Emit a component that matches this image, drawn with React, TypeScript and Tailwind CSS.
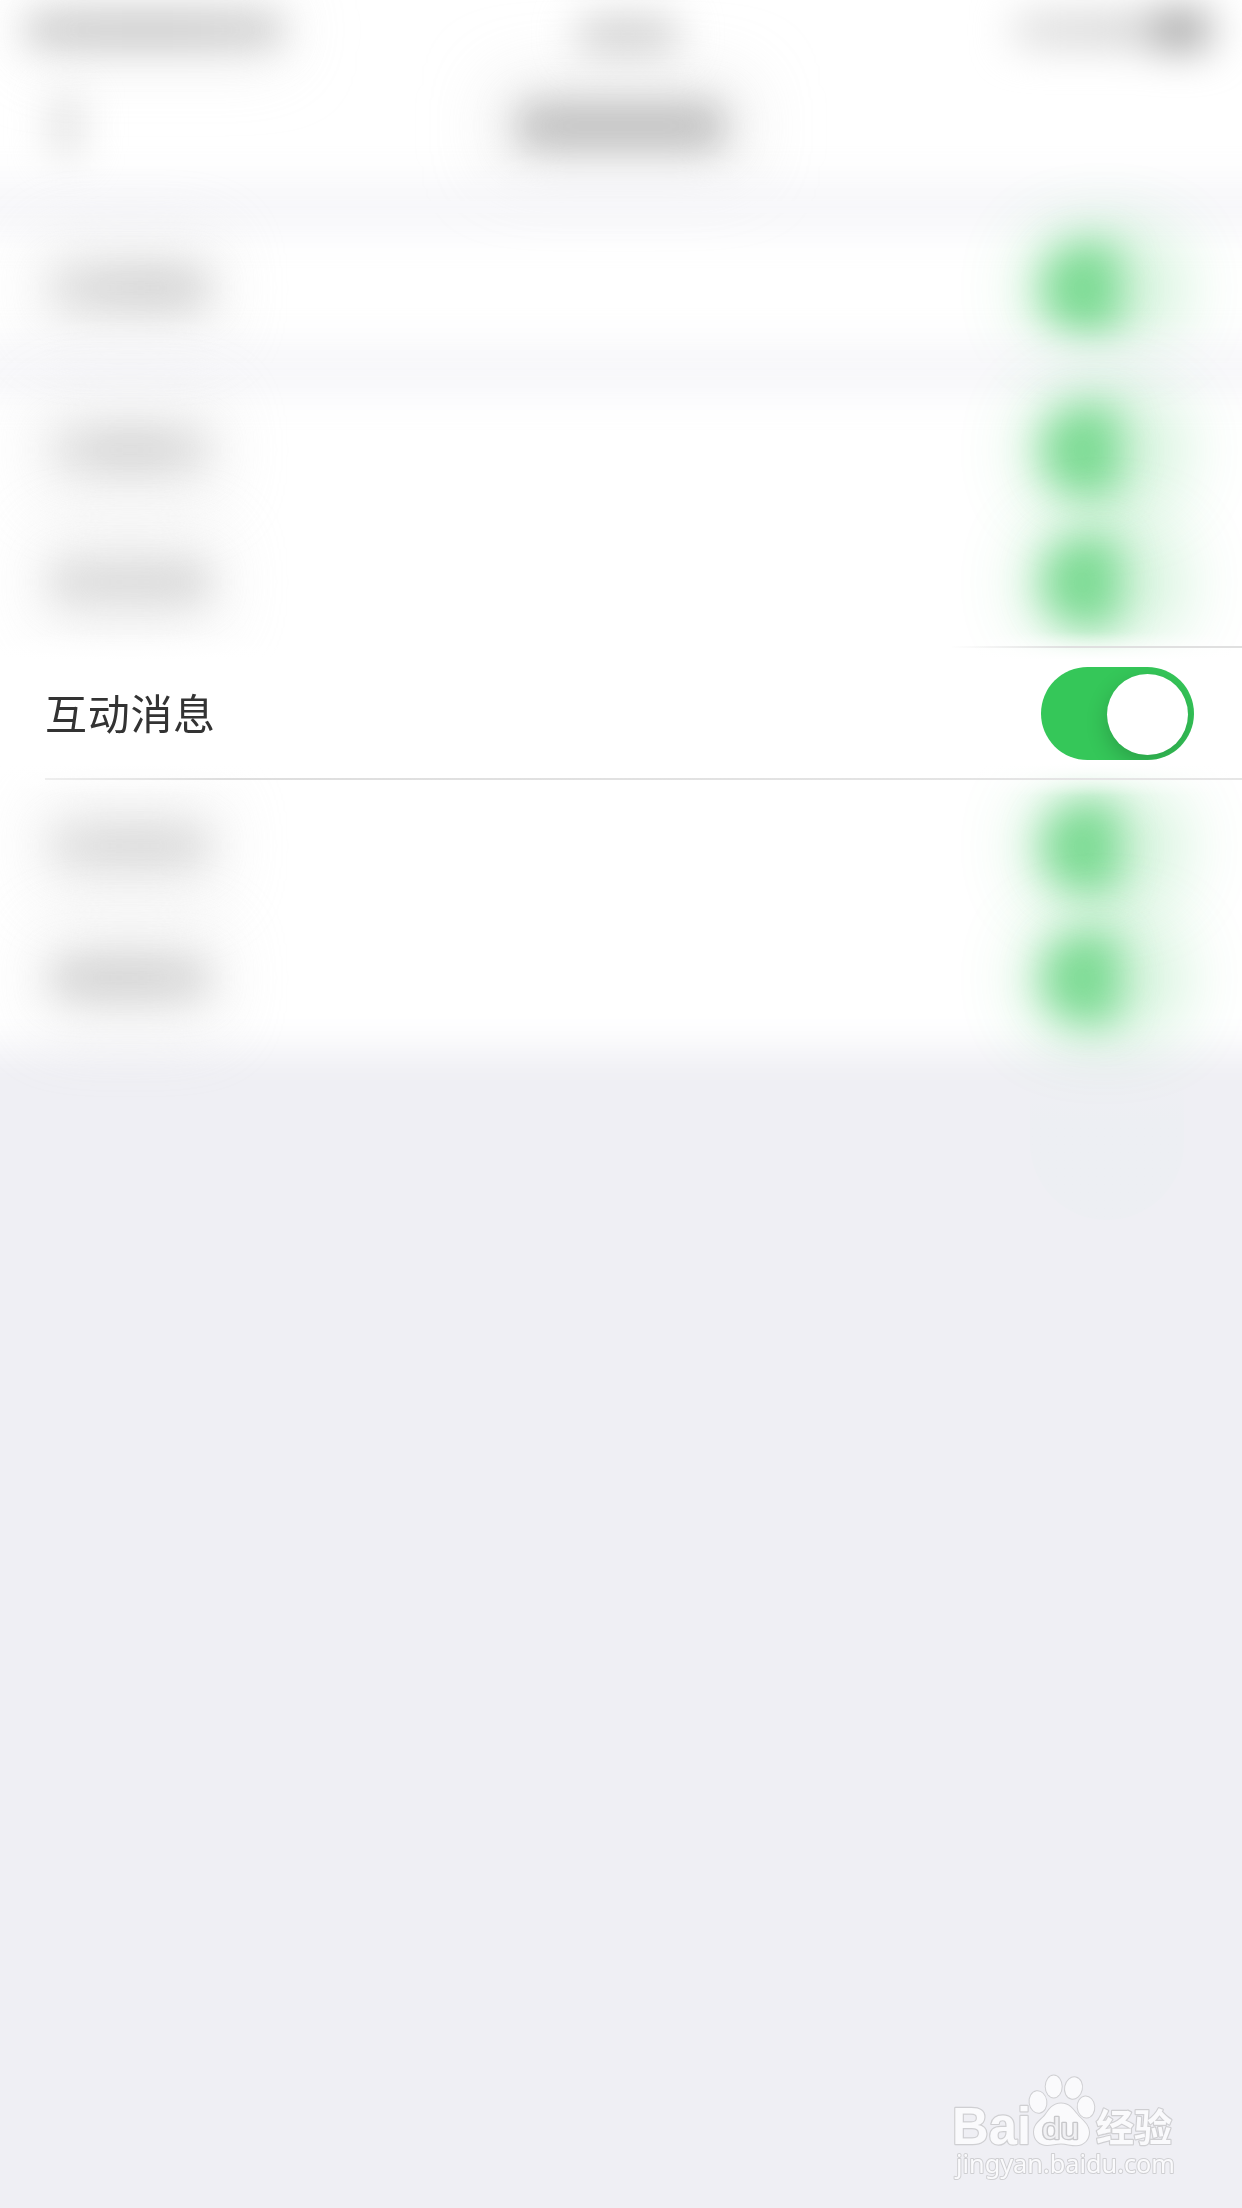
import React from "react";

function Toggle() {
  return (
    <div className="relative mb-px h-[93px] w-[153px] shrink-0 overflow-hidden rounded-full bg-[#35c759]">
      <div className="absolute left-[66px] top-[6.5px] size-[81px] rounded-full bg-white shadow-[0_8px_22px_rgba(0,0,0,0.2)]" />
    </div>
  );
}

function SoftToggle() {
  return (
    <div className="relative h-[93px] w-[153px] shrink-0">
      <div className="absolute -left-3 -top-2 h-[109px] w-[150px] rounded-[44px] bg-[#35c759] opacity-[0.26] blur-[36px]" />
      <div className="absolute left-0 top-0 h-[93px] w-[78px] rounded-l-[44px] rounded-r-2xl bg-[#35c759] opacity-[0.54] blur-[20px]" />
    </div>
  );
}

function SoftLabel({ shade }: { shade: string }) {
  return (
    <div className="relative h-10 w-[170px]">
      <div className="absolute -inset-x-1 -inset-y-7 rounded-xl bg-[#d9d9d9] opacity-40 blur-[34px]" />
      <div className={`absolute inset-x-1 inset-y-0 rounded-2xl opacity-50 mix-blend-multiply blur-[19px] ${shade}`} />
    </div>
  );
}

function SoftRow({ shade }: { shade: string }) {
  return (
    <div className="flex h-[132px] items-center justify-between pl-[45px] pr-12">
      <SoftLabel shade={shade} />
      <SoftToggle />
    </div>
  );
}

function FocusRow() {
  return (
    <div className="relative z-10 h-[132px]">
      <div className="absolute inset-x-0 -bottom-4 -top-4 bg-[linear-gradient(to_bottom,transparent,white_28px,white_132px,transparent)]" />
      <div className="absolute -top-0.5 left-[950px] right-0 h-0.5 bg-linear-to-r from-transparent to-[#e0e0e0] to-40%" />
      <div className="absolute bottom-0 left-[45px] right-0 h-0.5 bg-linear-to-r from-[#eeeeee] via-[#dedede] via-15% to-[#e6e6e6]" />
      <div className="relative flex h-full items-center justify-between pl-[45px] pr-12">
        <span className="mb-[5px] text-[42px] leading-none tracking-[0.7px] text-[#333333] [font-family:'Noto_Sans_CJK_SC',sans-serif]">
          互动消息
        </span>
        <Toggle />
      </div>
    </div>
  );
}

function Header() {
  return (
    <header className="h-[192px]">
      <div className="flex h-[60px] items-center justify-between pl-6 pr-8">
        <div className="relative h-9 w-[262px]">
          <div className="absolute inset-0 rounded-2xl bg-linear-to-r from-[#dadada] via-[#d4d4d4] to-[#dedede] blur-[18px]" />
          <div className="absolute -inset-y-3 inset-x-0 rounded-2xl bg-[#cccccc] opacity-30 mix-blend-multiply blur-[32px]" />
        </div>
        <div className="mr-[44px] mt-2 h-8 w-[104px] rounded-2xl bg-[#cccccc] blur-[21px]" />
        <div className="flex items-center gap-1 blur-[20px]">
          <div className="h-8 w-[132px] rounded-lg bg-linear-to-r from-[#dedede] to-[#cecece]" />
          <div className="h-10 w-[60px] rounded-lg bg-[#a4a4a4]" />
        </div>
      </div>
      <div className="grid h-[132px] grid-cols-3 items-center px-[52px]">
        <div className="h-[62px] w-7 rounded-xl bg-[#dddddd] blur-[20px]" />
        <div className="relative h-12 w-[208px] justify-self-center">
          <div className="absolute inset-0 rounded-2xl bg-[#d2d2d2] blur-[18px]" />
          <div className="absolute -inset-5 rounded-2xl bg-[#c4c4c4] opacity-35 mix-blend-multiply blur-[34px]" />
        </div>
      </div>
    </header>
  );
}

function Watermark() {
  return (
    <svg
      className="absolute bottom-2 right-[42px] h-[150px] w-[270px]"
      viewBox="0 0 270 150"
      fill="#fafafc"
      stroke="#cfcfd2"
      strokeWidth="2.4"
      strokeLinejoin="round"
      paintOrder="stroke"
    >
      <g fontFamily="'Liberation Sans', sans-serif" fontWeight="700">
        <text x="22" y="94" fontSize="51" textLength="79" lengthAdjust="spacingAndGlyphs">Bai</text>
      </g>
      <g strokeWidth="2">
        <ellipse cx="108" cy="52" rx="8.4" ry="10.8" transform="rotate(-8 108 52)" />
        <ellipse cx="123.7" cy="36.5" rx="8" ry="11" />
        <ellipse cx="143.5" cy="38" rx="8.4" ry="10.8" transform="rotate(12 143.5 38)" />
        <ellipse cx="156" cy="57" rx="8.3" ry="10.5" transform="rotate(-5 156 57)" />
        <path d="M131 53.500c-8 0-12 6-15 10.500-4 6-12 9-12 18 0 8 6 13 13 13 5 0 9-1.500 14-1.500s10 1.800 15 1.800c8 0 13-6 13-13 0-8-8-13-12-18-4-5-8-10.800-16-10.800z" />
      </g>
      <text x="112" y="88.5" fontSize="29" fill="#f0f0f3" stroke="#c8c8cb" strokeWidth="2.6" textLength="37" lengthAdjust="spacingAndGlyphs" fontFamily="'Liberation Sans', sans-serif">du</text>
      <text x="166" y="91" fontSize="38" fontWeight="700" textLength="76" fontFamily="'Noto Sans CJK SC', sans-serif">经验</text>
      <text x="26" y="123" fontSize="26" strokeWidth="2" textLength="219" lengthAdjust="spacingAndGlyphs" fontFamily="'Noto Sans', sans-serif">jingyan.baidu.com</text>
    </svg>
  );
}

export default function App() {
  return (
    <main className="relative h-[2208px] w-[1242px] overflow-hidden bg-[#efeff4]">
      <div className="absolute inset-x-0 -top-20 -mx-20 h-[1130px] bg-white blur-[20px]" />
      <div className="absolute left-[1030px] top-[1080px] h-[140px] w-[154px] rounded-b-full bg-linear-to-b from-transparent to-[#edeff3] to-30%" />
      <div className="relative flex flex-col">
        <Header />
        <div className="-mx-20 h-[30px] bg-[#f1f1f6] blur-[22px]" />
        <SoftRow shade="bg-linear-to-r from-[#dcdcdc] via-[#bebebe] via-65% to-[#cccccc]" />
        <div className="-mx-20 h-[30px] bg-[#f1f1f6] blur-[22px]" />
        <SoftRow shade="bg-linear-to-r from-[#e6e6e6] via-[#c2c2c2] to-[#dedede]" />
        <SoftRow shade="bg-linear-to-r from-[#cecece] via-[#d4d4d4] via-40% to-[#c8c8c8]" />
        <FocusRow />
        <SoftRow shade="bg-linear-to-r from-[#dcdcdc] via-[#d0d0d0] to-[#d4d4d4]" />
        <SoftRow shade="bg-linear-to-r from-[#c8c8c8] via-[#bcbcbc] via-40% to-[#cccccc]" />
      </div>
      <Watermark />
    </main>
  );
}
